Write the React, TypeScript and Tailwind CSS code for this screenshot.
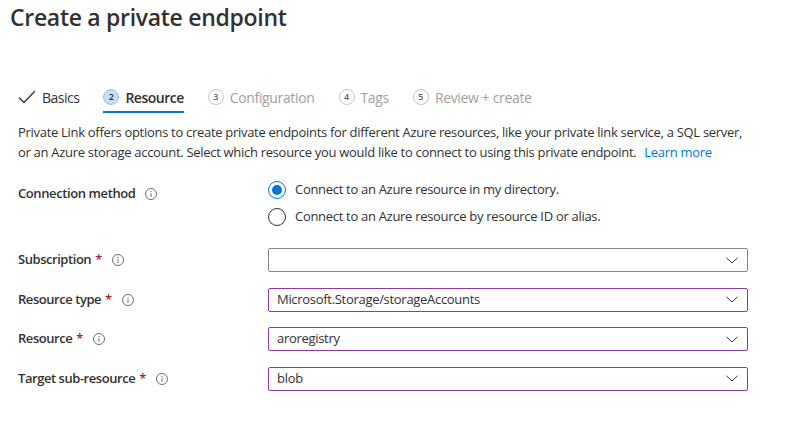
import React from "react";

const TABS = [
  { n: 0, label: "Basics", state: "done" },
  { n: 2, label: "Resource", state: "active" },
  { n: 3, label: "Configuration", state: "todo" },
  { n: 4, label: "Tags", state: "todo" },
  { n: 5, label: "Review + create", state: "todo" },
];

const FIELDS = [
  { label: "Subscription", value: "", touched: false },
  { label: "Resource type", value: "Microsoft.Storage/storageAccounts", touched: true },
  { label: "Resource", value: "aroregistry", touched: true },
  { label: "Target sub-resource", value: "blob", touched: true },
];

function InfoIcon() {
  return (
    <svg width="12" height="12" viewBox="0 0 12 12" className="shrink-0">
      <circle cx="6" cy="6" r="5.5" fill="none" stroke="#605e5c" strokeWidth="0.9" />
      <circle cx="6" cy="3.6" r="0.6" fill="#605e5c" />
      <path d="M6 5.2v3.8" stroke="#605e5c" strokeWidth="0.9" />
    </svg>
  );
}

function Chevron() {
  return (
    <svg width="12" height="7" viewBox="0 0 12 7" className="shrink-0">
      <path d="M0.5 0.8 6 6 11.5 0.8" fill="none" stroke="#323130" strokeWidth="1" />
    </svg>
  );
}

function Tab({ n, label, state }: { n: number; label: string; state: string }) {
  return (
    <div className="relative flex items-center gap-[6px] h-[30px]">
      {state === "done" ? (
        <svg width="18" height="14" viewBox="0 0 18 14">
          <path d="M1 7.5 6 12.5 17 1" fill="none" stroke="#323130" strokeWidth="1.3" />
        </svg>
      ) : (
        <span
          className={
            state === "active"
              ? "flex items-center justify-center w-4 h-4 rounded-full bg-[#c7e0f4] border border-[#8fc3ea] text-[9px] font-semibold text-[#323130]"
              : "flex items-center justify-center w-4 h-4 rounded-full bg-white border border-[#c8c6c4] text-[9px] font-semibold text-[#605e5c]"
          }
        >
          {n}
        </span>
      )}
      <span
        className={
          state === "active"
            ? "text-[14px] font-semibold text-[#323130] tracking-[-0.5px]"
            : state === "done"
            ? "text-[14px] text-[#323130] tracking-[-0.5px]"
            : "text-[14px] text-[#a19f9d] tracking-[-0.35px]"
        }
      >
        {label}
      </span>
      {state === "active" && <div className="absolute left-0 right-0 bottom-[-1px] h-[2px] bg-[#0078d4]" />}
    </div>
  );
}

export default function App() {
  return (
    <div
      className="w-[786px] h-[425px] bg-white overflow-hidden text-[#323130]"
      style={{ fontFamily: '"Open Sans", "Noto Sans", sans-serif' }}
    >
      <h1 className="pl-[10px] pt-[1px] text-[23px] leading-[32px] font-semibold tracking-[-0.3px] text-[#323130]">
        Create a private endpoint
      </h1>

      {/* Wizard tabs */}
      <div className="flex items-center gap-[24px] pl-[18px] mt-[49px]">
        {TABS.map(t => (
          <Tab key={t.label} n={t.n} label={t.label} state={t.state} />
        ))}
      </div>

      <p className="pl-[18px] mt-[10px] text-[13px] leading-[20px] tracking-[-0.3px] text-[#323130] whitespace-nowrap">
        Private Link offers options to create private endpoints for different Azure resources, like your private link service, a SQL server,
        <br />
        or an Azure storage account. Select which resource you would like to connect to using this private endpoint.
        <span className="ml-[8px] text-[#0078d4]">Learn more</span>
      </p>

      {/* Connection method */}
      <div className="flex mt-[19px]">
        <div className="w-[268px] pl-[18px] flex items-center gap-[9px] h-[18px] mt-[4px]">
          <span className="text-[13px] font-semibold tracking-[-0.4px]">Connection method</span>
          <InfoIcon />
        </div>
        <div className="flex flex-col gap-[9px]">
          <div className="flex items-center gap-[9px] h-[18px]">
            <span className="flex items-center justify-center w-[18px] h-[18px] rounded-full border border-[#0078d4]">
              <span className="w-[10px] h-[10px] rounded-full bg-[#0078d4]" />
            </span>
            <span className="text-[13px] tracking-[-0.3px]">Connect to an Azure resource in my directory.</span>
          </div>
          <div className="flex items-center gap-[9px] h-[18px]">
            <span className="w-[18px] h-[18px] rounded-full border border-[#323130]" />
            <span className="text-[13px] tracking-[-0.3px]">Connect to an Azure resource by resource ID or alias.</span>
          </div>
        </div>
      </div>

      {/* Dropdown fields */}
      <div className="flex flex-col gap-[15.5px] mt-[22px]">
        {FIELDS.map(f => (
          <div key={f.label} className="flex items-center">
            <div className="w-[268px] pl-[18px] flex items-center">
              <span className="text-[13px] font-semibold tracking-[-0.45px]">{f.label}</span>
              <span className="ml-[4px] text-[13px] font-semibold text-[#a4262c]">*</span>
              <span className="ml-[10px] flex">
                <InfoIcon />
              </span>
            </div>
            <div
              className={
                f.touched
                  ? "w-[480px] h-[24px] border border-[#8a3ba6] rounded-[2px] flex items-center justify-between pl-[8px] pr-[9px]"
                  : "w-[480px] h-[24px] border border-[#8a8886] rounded-[2px] flex items-center justify-between pl-[8px] pr-[9px]"
              }
            >
              <span className="text-[13px] tracking-[-0.3px]">{f.value}</span>
              <Chevron />
            </div>
          </div>
        ))}
      </div>
    </div>
  );
}
